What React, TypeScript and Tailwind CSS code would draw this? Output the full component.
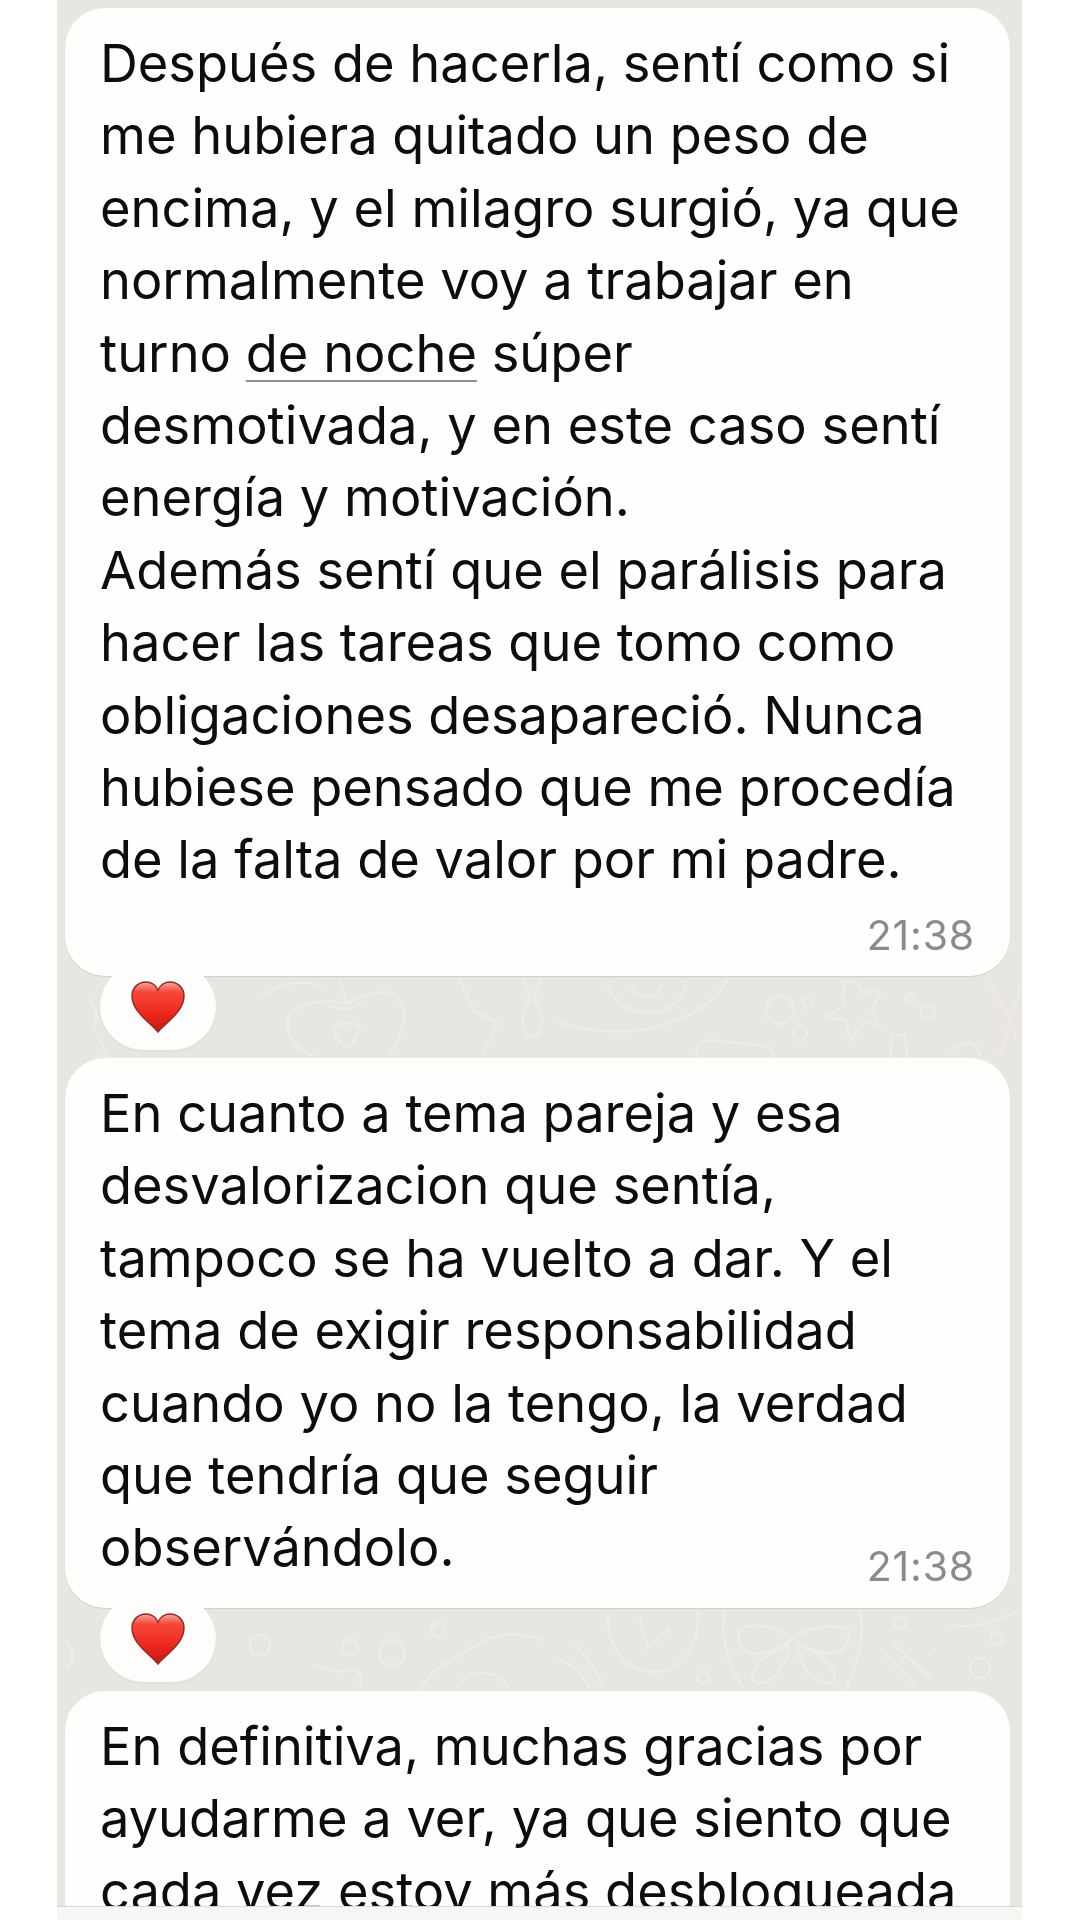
const firstLines = [
  "Después de hacerla, sentí como si",
  "me hubiera quitado un peso de",
  "encima, y el milagro surgió, ya que",
  "normalmente voy a trabajar en",
]

const firstLinesEnd = [
  "desmotivada, y en este caso sentí",
  "energía y motivación.",
  "Además sentí que el parálisis para",
  "hacer las tareas que tomo como",
  "obligaciones desapareció. Nunca",
  "hubiese pensado que me procedía",
  "de la falta de valor por mi padre.",
]

const secondLines = [
  "En cuanto a tema pareja y esa",
  "desvalorizacion que sentía,",
  "tampoco se ha vuelto a dar. Y el",
  "tema de exigir responsabilidad",
  "cuando yo no la tengo, la verdad",
  "que tendría que seguir",
]

const thirdLines = [
  "En definitiva, muchas gracias por",
  "ayudarme a ver, ya que siento que",
  "cada vez estoy más desbloqueada",
]

function Lines({ items }: { items: string[] }) {
  return (
    <>
      {items.map((line) => (
        <div key={line} className="whitespace-nowrap">
          {line}
        </div>
      ))}
    </>
  )
}

function Time() {
  return <span className="text-[41px] leading-none tracking-[0.8px] text-[#8b8b8b]">21:38</span>
}

function Reaction() {
  return (
    <div className="relative z-10 ml-[35px] -mt-[13px] flex h-[87px] w-[116px] items-center justify-center rounded-full bg-[#fdfdfc] shadow-[0_1px_3px_rgba(0,0,0,0.06)]">
      <svg viewBox="0 0 56 54" className="h-[54px] w-[56px]">
        <defs>
          <linearGradient id="heartFill" x1="0" y1="0" x2="0" y2="1">
            <stop offset="0" stopColor="#f7a79c" />
            <stop offset="0.2" stopColor="#f6483c" />
            <stop offset="0.6" stopColor="#ee2a1e" />
            <stop offset="1" stopColor="#c9170f" />
          </linearGradient>
        </defs>
        <path
          d="M28 52C21 43 2 32 2 16C2 7 9 2 16 2C21 2 26 5 28 10C30 5 35 2 40 2C47 2 54 7 54 16C54 32 35 43 28 52Z"
          fill="url(#heartFill)"
          stroke="#8f2a24"
          strokeWidth="1.4"
        />
      </svg>
    </div>
  )
}

// faint chat wallpaper, drawn in page coordinates
function Wallpaper() {
  return (
    <svg
      viewBox="57 0 965 1906"
      className="absolute inset-0 h-full w-full"
      fill="none"
      stroke="#edece7"
      strokeWidth="2.5"
      strokeLinecap="round"
    >
      <path d="M263 997C280 982 300 980 320 985" />
      <path d="M345 1003C325 1000 295 1000 288 1020C285 1038 298 1050 312 1055" />
      <path d="M347 1003C360 995 388 985 400 1000C408 1015 402 1040 388 1054" />
      <path d="M340 982L347 1003M332 1006C345 1012 355 1008 362 1000" />
      <path d="M333 1027C340 1022 352 1022 360 1027C358 1038 352 1044 347 1047C341 1044 335 1038 333 1027Z" />
      <path d="M460 980L473 1010L497 1023L483 1053" />
      <path d="M524 980L530 1000M540 980L534 1000M530 1000C518 1015 522 1036 532 1037C544 1036 546 1015 534 1000" />
      <path d="M607 982C612 1003 630 1013 650 1013C668 1012 684 1000 687 982" />
      <path d="M632 985C636 1000 656 1003 662 985" />
      <path d="M560 1023C585 1030 610 1033 635 1031C675 1026 712 1008 727 980" />
      <circle cx="780" cy="1010" r="14" />
      <circle cx="807" cy="1003" r="5" />
      <circle cx="800" cy="1033" r="7" />
      <path d="M843 982C852 978 860 985 862 992L880 992L872 1010L880 1027L866 1020L850 1040L846 1020L826 1018L844 1005Z" />
      <circle cx="910" cy="997" r="4" />
      <circle cx="928" cy="1012" r="7" />
      <path d="M697 1058C695 1046 702 1040 712 1040L765 1046C772 1048 773 1053 773 1058" />
      <path d="M890 1058L892 1035L905 1035L907 1058" />
      <path d="M950 1050C965 1040 975 1040 980 1055" />
      <path d="M990 980C996 1000 1010 1010 1016 1040M1000 1055C1006 1035 1015 1015 1020 985" stroke="#eee9e4" />
      <path d="M90 1000C96 1010 100 1020 92 1030M100 1040L108 1058" />
      <path d="M575 1645C590 1660 600 1675 603 1690M560 1660C575 1665 585 1678 590 1690" />
      <path d="M608 1612C606 1645 625 1672 653 1672C682 1672 700 1645 698 1612" />
      <path d="M640 1620L648 1648L670 1628" />
      <circle cx="703" cy="1678" r="6" />
      <path d="M724 1612C720 1640 730 1670 745 1690M860 1612C866 1640 855 1670 845 1690" />
      <path d="M793 1638C775 1625 750 1622 740 1630C735 1645 745 1656 760 1653C775 1652 785 1645 793 1638Z" />
      <path d="M793 1638C810 1625 838 1624 848 1630C852 1645 840 1656 826 1653C812 1652 800 1645 793 1638Z" />
      <path d="M788 1645C770 1650 752 1665 752 1678C758 1690 778 1682 790 1650" />
      <path d="M798 1645C815 1650 835 1665 835 1678C828 1690 806 1682 798 1650" />
      <path d="M880 1648L915 1685M892 1642L930 1678M910 1650L900 1662M930 1655L935 1650" />
      <circle cx="900" cy="1623" r="6" />
      <circle cx="997" cy="1638" r="6" />
      <circle cx="980" cy="1668" r="10" />
      <path d="M950 1625C975 1630 1000 1620 1020 1610" />
      <circle cx="260" cy="1645" r="10" />
      <circle cx="350" cy="1647" r="8" />
      <circle cx="392" cy="1653" r="13" />
      <circle cx="438" cy="1630" r="7" />
      <path d="M315 1665C325 1670 340 1675 350 1668C362 1672 365 1680 358 1690" />
      <path d="M420 1690C430 1670 450 1660 477 1645C495 1632 520 1632 543 1640" />
      <path d="M455 1690C470 1665 500 1670 510 1690" />
      <path d="M66 1640C75 1650 75 1660 66 1668" />
    </svg>
  )
}

export default function App() {
  return (
    <div className="flex h-[1920px] w-[1080px] flex-col overflow-hidden bg-white pl-[57px] pr-[58px] font-['Inter',sans-serif] text-[52.4px] leading-[72.4px] text-[#0d0d0d] blur-[0.5px]">
      <div className="relative min-h-0 flex-1 overflow-hidden bg-[#e8e6e0]">
        <Wallpaper />
        <div className="relative flex flex-col pt-[8px] pl-[8px] pr-[12px]">
          <div className="h-[968px] rounded-[40px] bg-[#fefefc] px-[35px] pt-[19px] shadow-[0_1px_1px_rgba(0,0,0,0.1)]">
            <Lines items={firstLines} />
            <div className="whitespace-nowrap">
              turno{" "}
              <span className="underline decoration-[#8f8f8f] decoration-2 underline-offset-[8px]">de noche</span>{" "}
              súper
            </div>
            <Lines items={firstLinesEnd} />
            <div className="-mt-[1px] text-right">
              <Time />
            </div>
          </div>
          <Reaction />
          <div className="mt-[8px] flex h-[550px] flex-col rounded-[40px] bg-[#fefefc] px-[35px] pt-[19px] shadow-[0_1px_1px_rgba(0,0,0,0.1)]">
            <Lines items={secondLines} />
            <div className="flex items-end justify-between">
              <span>observándolo.</span>
              <div className="-mb-[3px] flex">
                <Time />
              </div>
            </div>
          </div>
          <Reaction />
          <div className="mt-[9px] h-[300px] rounded-[40px] bg-[#fefefc] px-[35px] pt-[19px]">
            <Lines items={thirdLines} />
          </div>
        </div>
      </div>
      <div className="h-[14px] border-t border-[#d6d6d3] bg-[#f6f6f4]" />
    </div>
  )
}
